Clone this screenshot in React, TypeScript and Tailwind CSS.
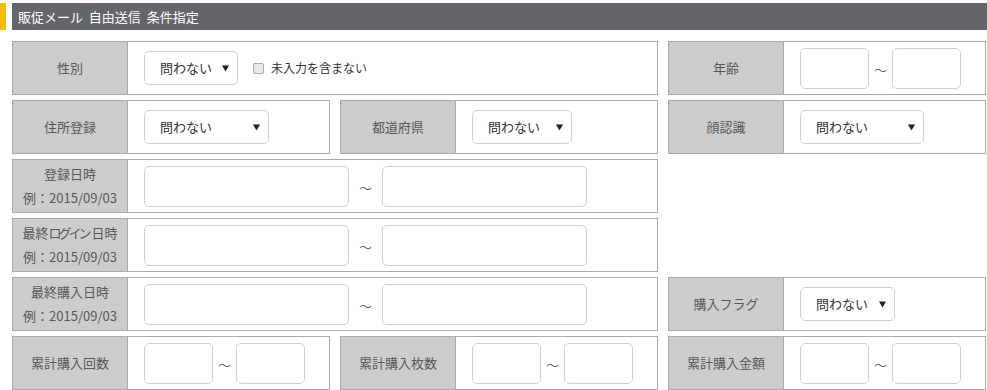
import React from "react";

const font = { fontFamily: '"Noto Sans CJK JP", "Noto Sans", sans-serif' };

function Arrow() {
  return (
    <svg width="7" height="7" viewBox="0 0 7 7" className="block">
      <path d="M0 0.5 H7 L3.5 6.5 Z" fill="#222" />
    </svg>
  );
}

function Select({ w }: { w: string }) {
  return (
    <div
      className={`${w} h-[34px] border border-[#cfcfcf] rounded-[5px] bg-white flex items-center justify-between pl-[15px] pr-[8px] text-[13px] text-[#333]`}
    >
      <span>問わない</span>
      <Arrow />
    </div>
  );
}

function Input({ w }: { w: string }) {
  return <div className={`${w} h-[41px] border border-[#cfcfcf] rounded-[5px] bg-white`} />;
}

function Tilde({ m }: { m: string }) {
  return <span className={`${m} text-[13px] text-[#666] leading-none pt-[3px]`}>～</span>;
}

function Label({ children }: { children: React.ReactNode }) {
  return (
    <div className="w-[115px] shrink-0 bg-[#cccccc] border-r border-[#aaaaaa] flex flex-col items-center justify-center text-[13px] text-[#595959] leading-[24px]">
      {children}
    </div>
  );
}

function Box({
  label,
  children,
  className = "",
}: {
  label: React.ReactNode;
  children?: React.ReactNode;
  className?: string;
}) {
  return (
    <div className={`h-[54px] border border-[#aaaaaa] flex bg-white ${className}`}>
      <Label>{label}</Label>
      <div className="flex-1 flex items-center pl-[16px]">{children}</div>
    </div>
  );
}

function Range({ w, m }: { w: string; m: string }) {
  return (
    <div className="flex items-center">
      <Input w={w} />
      <Tilde m={m} />
      <Input w={w} />
    </div>
  );
}

function DateLabel({ title }: { title: React.ReactNode }) {
  return (
    <>
      <span>{title}</span>
      <span>例：2015/09/03</span>
    </>
  );
}

export default function App() {
  return (
    <div className="w-[987px] h-[390px] bg-white overflow-hidden pt-[3px]" style={font}>
      <div className="flex h-[27px]">
        <div className="w-[6px] bg-[#f7bb00]" />
        <div className="w-[6px]" />
        <div className="flex-1 bg-[#64666c] flex items-center pl-[6px] text-[13px] text-white">
          販促メール&nbsp;&nbsp;自由送信&nbsp;&nbsp;条件指定
        </div>
      </div>
      <div className="pl-[12px] pt-[11px] grid grid-cols-[318px_318px_318px] gap-x-[10px] gap-y-[5px]">
        <Box label="性別" className="col-span-2">
          <Select w="w-[94px]" />
          <div className="ml-[15px] w-[11px] h-[11px] border border-[#aaa] bg-[#e8e8e8] rounded-[2px]" />
          <span className="ml-[7px] text-[12px] text-[#333]">未入力を含まない</span>
        </Box>
        <Box label="年齢">
          <Range w="w-[69px]" m="mx-[5px]" />
        </Box>

        <Box label="住所登録">
          <Select w="w-[125px]" />
        </Box>
        <Box label="都道府県">
          <Select w="w-[100px]" />
        </Box>
        <Box label="顔認識">
          <Select w="w-[124px]" />
        </Box>

        <Box label={<DateLabel title="登録日時" />} className="col-span-2">
          <Range w="w-[205px]" m="mx-[10px]" />
        </Box>
        <div />

        <Box
          label={
            <DateLabel
              title={
                <>
                  最終<span className="tracking-[-3px] mr-[3px]">ログイン</span>日時
                </>
              }
            />
          }
          className="col-span-2"
        >
          <Range w="w-[205px]" m="mx-[10px]" />
        </Box>
        <div />

        <Box label={<DateLabel title="最終購入日時" />} className="col-span-2">
          <Range w="w-[205px]" m="mx-[10px]" />
        </Box>
        <Box label="購入フラグ">
          <Select w="w-[95px]" />
        </Box>

        <Box label="累計購入回数">
          <Range w="w-[69px]" m="mx-[5px]" />
        </Box>
        <Box label="累計購入枚数">
          <Range w="w-[69px]" m="mx-[5px]" />
        </Box>
        <Box label="累計購入金額">
          <Range w="w-[69px]" m="mx-[5px]" />
        </Box>
      </div>
    </div>
  );
}
